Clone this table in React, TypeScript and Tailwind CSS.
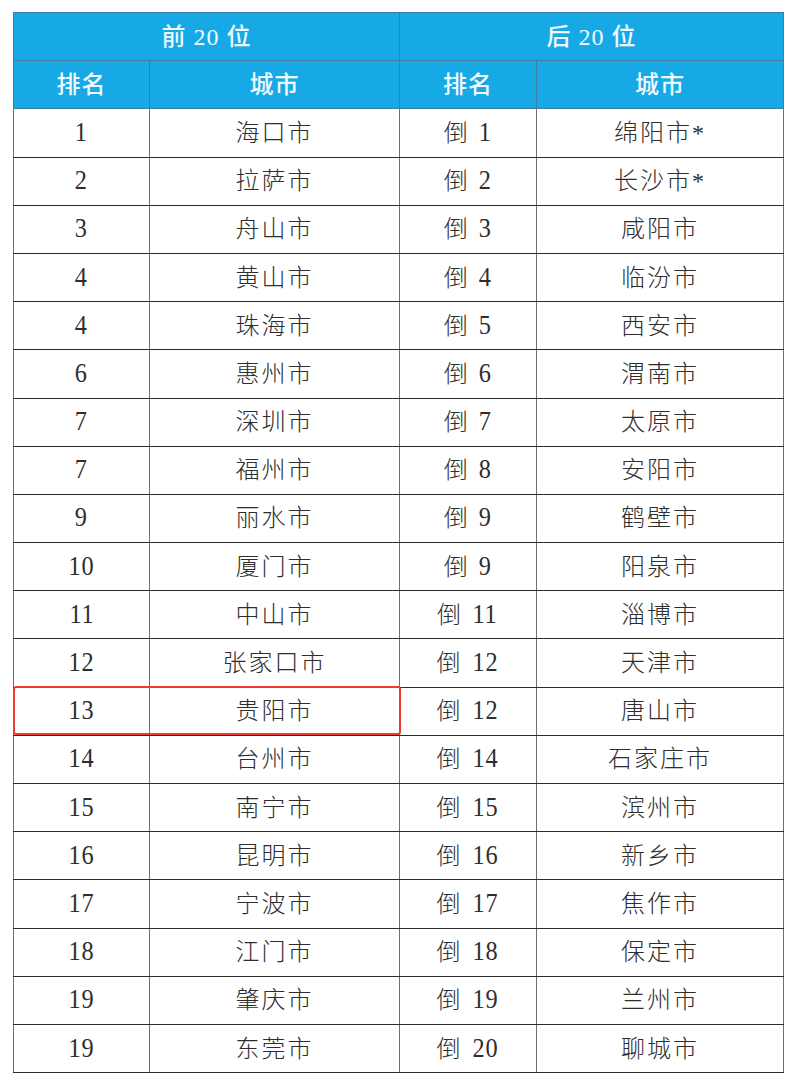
const top20: Array<[string, string]> = [
  ["1", "海口市"], ["2", "拉萨市"], ["3", "舟山市"], ["4", "黄山市"], ["4", "珠海市"],
  ["6", "惠州市"], ["7", "深圳市"], ["7", "福州市"], ["9", "丽水市"], ["10", "厦门市"],
  ["11", "中山市"], ["12", "张家口市"], ["13", "贵阳市"], ["14", "台州市"], ["15", "南宁市"],
  ["16", "昆明市"], ["17", "宁波市"], ["18", "江门市"], ["19", "肇庆市"], ["19", "东莞市"],
];

const bottom20: Array<[string, string]> = [
  ["倒 1", "绵阳市*"], ["倒 2", "长沙市*"], ["倒 3", "咸阳市"], ["倒 4", "临汾市"], ["倒 5", "西安市"],
  ["倒 6", "渭南市"], ["倒 7", "太原市"], ["倒 8", "安阳市"], ["倒 9", "鹤壁市"], ["倒 9", "阳泉市"],
  ["倒 11", "淄博市"], ["倒 12", "天津市"], ["倒 12", "唐山市"], ["倒 14", "石家庄市"], ["倒 15", "滨州市"],
  ["倒 16", "新乡市"], ["倒 17", "焦作市"], ["倒 18", "保定市"], ["倒 19", "兰州市"], ["倒 20", "聊城市"],
];

// digits are set taller and narrower than the CJK text
function Txt({ s }: { s: string }) {
  return (
    <>
      {s.split(/(\d+)/).map((p, i) =>
        /^\d+$/.test(p) ? (
          <span key={i} className="inline-block text-[27px] tracking-[1px] scale-x-90 leading-none">{p}</span>
        ) : (
          <span key={i}>{p}</span>
        )
      )}
    </>
  );
}

export default function App() {
  const font = { fontFamily: '"Liberation Serif", "Noto Sans CJK SC", serif' };
  const head = "border border-[#3d7f9c] bg-[#17a9e6] text-[#eefaff] text-[24px] font-medium tracking-[1px]";
  const cell = "border-y border-y-[#2c2c2c] border-x border-x-[#707070] text-[24px] text-[#2e2e2e] tracking-[2px] font-light";

  return (
    <div className="w-[800px] h-[1085px] bg-white pt-[12px] pl-[13px]" style={font}>
      <div className="relative w-[770px]">
        <table className="w-[770px] border-collapse table-fixed text-center">
          <colgroup>
            <col className="w-[136px]" />
            <col className="w-[250px]" />
            <col className="w-[137px]" />
            <col className="w-[247px]" />
          </colgroup>
          <thead>
            <tr className="h-[48.2px]">
              <th colSpan={2} className={head}>前 20 位</th>
              <th colSpan={2} className={head}>后 20 位</th>
            </tr>
            <tr className="h-[48.2px]">
              <th className={head}>排名</th>
              <th className={head}>城市</th>
              <th className={head}>排名</th>
              <th className={head}>城市</th>
            </tr>
          </thead>
          <tbody>
            {top20.map((r, i) => (
              <tr key={i} className="h-[48.2px]">
                <td className={cell}><Txt s={r[0]} /></td>
                <td className={cell}>{r[1]}</td>
                <td className={cell}><Txt s={bottom20[i][0]} /></td>
                <td className={cell}>{bottom20[i][1]}</td>
              </tr>
            ))}
          </tbody>
        </table>
        {/* highlight on 贵阳市 */}
        <div className="absolute left-0 top-[674px] w-[388px] h-[49px] border-2 border-[#f03a32] rounded-[3px] pointer-events-none" />
      </div>
    </div>
  );
}
